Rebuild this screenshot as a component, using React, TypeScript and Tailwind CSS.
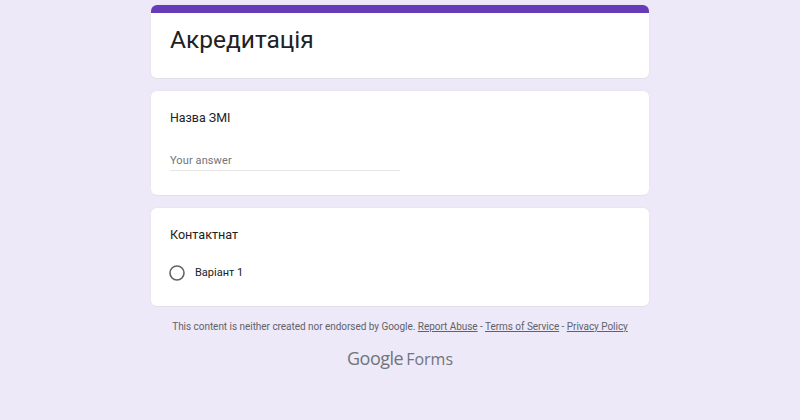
import React from 'react';

const Card: React.FC<{ className?: string; children: React.ReactNode }> = ({ className = '', children }) => (
  <div className={`bg-white rounded-[7px] border border-[#e9e6f1] border-b-[#e2dfe9] overflow-hidden ${className}`}>{children}</div>
);

export default function App() {
  return (
    <div className="w-[800px] h-[420px] overflow-hidden bg-[#ede9f8] font-['Roboto',sans-serif]">
      <div className="w-[500px] mx-auto pt-[4px] flex flex-col gap-[11px]">
        {/* Title card */}
        <Card className="h-[75px]">
          <div className="h-[8px] bg-[#673ab7]" />
          <h1 className="pl-[19px] pt-[9px] text-[24.5px] leading-[36px] text-[#202124]">Акредитація</h1>
        </Card>

        {/* Short answer */}
        <Card className="h-[106px] pl-[19px]">
          <div className="pt-[18px] text-[12.4px] leading-[18px] text-[#202124]">Назва ЗМІ</div>
          <div className="mt-[24px] w-[230px] h-[20px] border-b border-[#e6e6e6] text-[11px] leading-[20px] text-[#70757a] tracking-[0.1px]">
            Your answer
          </div>
        </Card>

        {/* Multiple choice */}
        <Card className="h-[100px] pl-[18px]">
          <div className="pl-px pt-[18px] text-[12.6px] leading-[18px] text-[#202124]">Контактнат</div>
          <div className="mt-[21px] flex items-center gap-[10px]">
            <svg width="16" height="16" viewBox="0 0 16 16" fill="none">
              <circle cx="8" cy="8" r="7" stroke="#5f6368" strokeWidth="1.6" />
            </svg>
            <span className="text-[11px] leading-[16px] text-[#202124]">Варіант 1</span>
          </div>
        </Card>
      </div>

      <div className="mt-[13px] text-center text-[10px] leading-[14px] text-[#5f6368] tracking-[-0.04px]">
        This content is neither created nor endorsed by Google.{' '}
        <span className="underline">Report Abuse</span> - <span className="underline">Terms of Service</span> -{' '}
        <span className="underline">Privacy Policy</span>
      </div>

      <div className="mt-[11px] flex justify-center items-baseline gap-[3px] text-[#70757a] font-['Open_Sans',sans-serif]">
        <span className="text-[18px] leading-[26px] font-medium tracking-[-0.5px]">Google</span>
        <span className="text-[16px] leading-[26px]">Forms</span>
      </div>
    </div>
  );
}
